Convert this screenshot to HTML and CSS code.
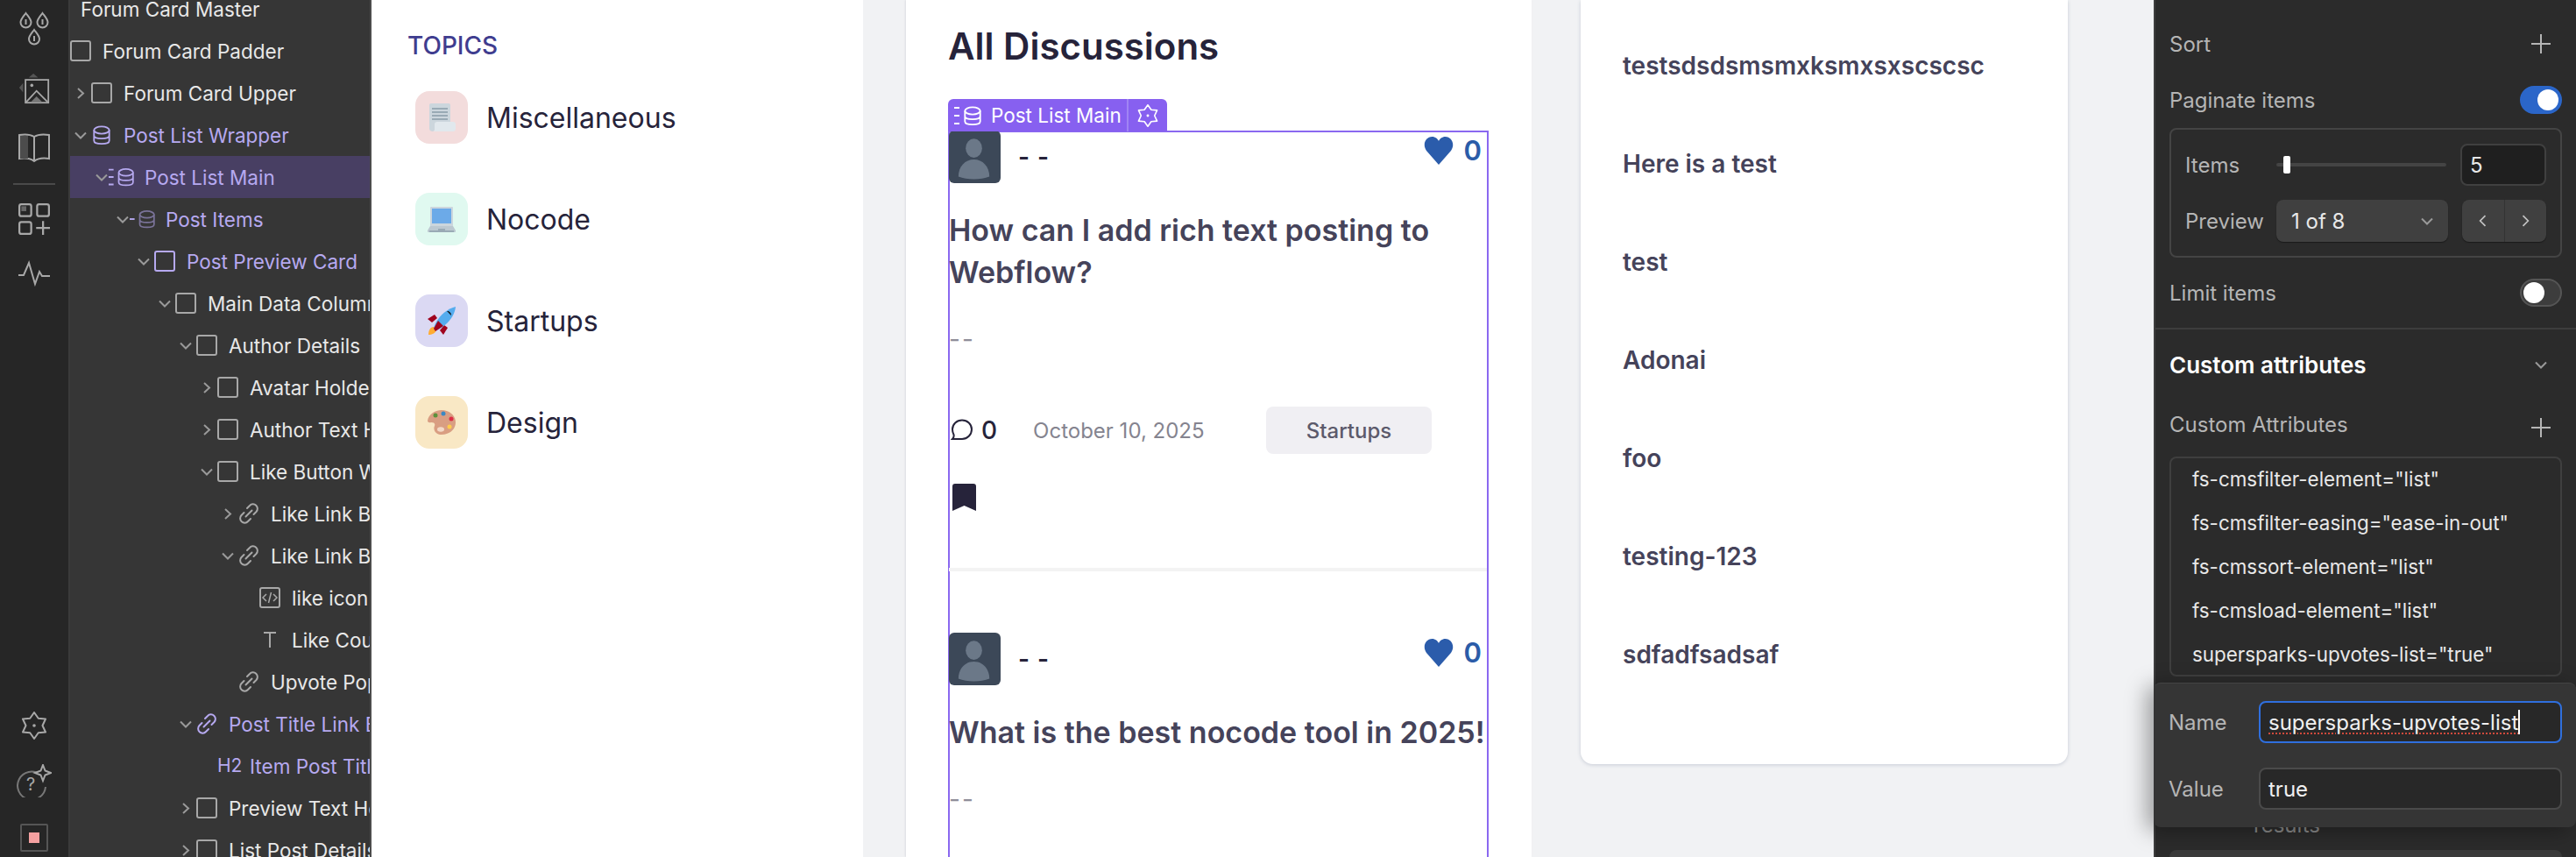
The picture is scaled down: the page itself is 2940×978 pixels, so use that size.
FILE: index.html
```html
<!DOCTYPE html>
<html>

<head>
    <title>Forum Card - Designer</title>
    <link rel="stylesheet" href="styles.css">
</head>

<body>
    <!-- shared icons -->
    <svg class="defs" width="0" height="0">
        <symbol id="box" viewBox="0 0 24 24"><rect x="1" y="1" width="22" height="22" rx="2" fill="none" stroke="currentColor" stroke-width="2"/></symbol>
        <symbol id="chev-r" viewBox="0 0 24 24"><path d="M9 7l6 5.500-6 5.500" fill="none" stroke="#9a9a9a" stroke-width="2"/></symbol>
        <symbol id="chev-d" viewBox="0 0 24 24"><path d="M6 9.500l6 6 6-6" fill="none" stroke="#9a9a9a" stroke-width="2"/></symbol>
        <symbol id="db" viewBox="0 0 24 24"><g fill="none" stroke="currentColor" stroke-width="2"><ellipse cx="12" cy="6" rx="9.500" ry="4.500"/><path d="M2.500 6v13c0 2.500 4 4 9.500 4s9.500-1.500 9.500-4V6M2.500 12.500c0 2.500 4 4 9.500 4s9.500-1.500 9.500-4"/></g></symbol>
        <symbol id="link" viewBox="0 0 24 24"><g fill="none" stroke="currentColor" stroke-width="2" stroke-linecap="round"><path d="M10 6l3-3a5 5 0 0 1 7.500 7l-3 3"/><path d="M14 18l-3 3a5 5 0 0 1-7.500-7l3-3"/><path d="M8.500 15.500l7-7"/></g></symbol>
        <symbol id="gear" viewBox="0 0 32 32"><polygon points="16,1 20.750,7.770 29,8.500 25.500,16 29,23.500 20.750,24.230 16,31 11.250,24.230 3,23.500 6.500,16 3,8.500 11.250,7.770" fill="none" stroke="currentColor" stroke-width="2" stroke-linejoin="round"/><circle cx="16" cy="16" r="1.800" fill="currentColor"/></symbol>
        <symbol id="heart" viewBox="0 0 34 32"><path d="M17 32L3 16C-2 9 2 0 9.500 0C13 0 16 2.500 17 5C18 2.500 21 0 24.500 0C32 0 36 9 31 16Z" fill="#2b5cab"/></symbol>
        <symbol id="person" viewBox="0 0 60 60"><ellipse cx="29" cy="20" rx="9.500" ry="11" fill="#6b7888"/><path d="M11 53c0-12 8-20 18-20s18 8 18 20c-10 4-26 4-36 0z" fill="#6b7888"/></symbol>
        <symbol id="plus" viewBox="0 0 22 22"><path d="M11 0v22M0 11h22" stroke="#b5b5b5" stroke-width="2"/></symbol>
    </svg>

    <div class="app">
        <!-- left rail -->
        <aside class="rail">
            <div class="rail-group">
                <svg class="rail-icon" viewBox="0 0 36 40"><g fill="none" stroke="#a8a8a8" stroke-width="2"><path d="M8.500 2c-3 4-6 7-6 10.500a6 6 0 0 0 12 0C14.500 9 11.500 6 8.500 2z"/><path d="M27.500 2c-3 4-6 7-6 10.500a6 6 0 0 0 12 0C33.500 9 30.500 6 27.500 2z"/><path d="M18 21c-3 4-6 7-6 10.500a6 6 0 0 0 12 0C24 28 21 25 18 21z"/></g><path d="M8.500 9v6M27.500 9v6M18 28v6" stroke="#a8a8a8" stroke-width="2"/></svg>
                <svg class="rail-icon" viewBox="0 0 40 40"><path d="M19 1l6 5H13zM1 19l5-6v12z" fill="#555"/><rect x="9" y="9" width="29" height="29" fill="none" stroke="#a8a8a8" stroke-width="2"/><circle cx="17" cy="16" r="2" fill="#a8a8a8"/><path d="M10 37l13-14 14 14" fill="none" stroke="#a8a8a8" stroke-width="2"/><path d="M16 37l7-7 7 7z" fill="#777"/></svg>
                <svg class="rail-icon" viewBox="0 0 36 34"><path d="M1 2c6-1 12-1 17 2 5-3 11-3 17-2v27c-6-1-12-1-17 3-5-4-11-4-17-3z" fill="none" stroke="#a8a8a8" stroke-width="2"/><path d="M18 4v28" stroke="#a8a8a8" stroke-width="2"/><path d="M2 3h9v26H2z" fill="#4c4c4c"/></svg>
                <div class="rail-rule"></div>
                <svg class="rail-icon" viewBox="0 0 32 32"><g fill="none" stroke="#a8a8a8" stroke-width="2"><rect x="1" y="1" width="12" height="12" rx="2"/><rect x="19" y="1" width="12" height="12" rx="2"/><rect x="1" y="19" width="12" height="12" rx="2"/><path d="M25 18v14M18 25h14"/></g><path d="M3 3h5v5H3z" fill="#666"/></svg>
                <svg class="rail-icon rail-pulse" viewBox="0 0 36 28"><path d="M0 16h6l6-14 7 24 5-14 3 5h9" fill="none" stroke="#a8a8a8" stroke-width="2"/></svg>
            </div>
            <div class="rail-group rail-bottom">
                <svg class="rail-gear"><use href="#gear"/></svg>
                <svg class="rail-help" viewBox="0 0 40 38"><path d="M27 12a16 16 0 1 0 6 14" fill="none" stroke="#777" stroke-width="2"/><text x="11" y="30" class="help-mark">?</text><path d="M30 1l2.500 6.500L39 10l-6.500 2.500L30 19l-2.500-6.500L21 10l6.500-2.500z" fill="#262626" stroke="#a8a8a8" stroke-width="2"/></svg>
                <div class="rail-stop"><span></span></div>
            </div>
        </aside>

        <!-- navigator tree -->
        <nav class="tree">
            <div class="row master"><span class="label">Forum Card Master</span></div>
            <div class="row"><svg class="ic"><use href="#box"/></svg><span class="label">Forum Card Padder</span></div>
            <div class="row"><svg class="chev"><use href="#chev-r"/></svg><svg class="ic"><use href="#box"/></svg><span class="label">Forum Card Upper</span></div>
            <div class="row purple"><svg class="chev"><use href="#chev-d"/></svg><svg class="ic db"><use href="#db"/></svg><span class="label">Post List Wrapper</span></div>
            <div class="row purple selected d1"><svg class="chev"><use href="#chev-d"/></svg><svg class="ic wide" viewBox="0 0 32 24"><path d="M0 3h6M0 12h6M0 21h6" stroke="#b6a9f0" stroke-width="2"/><use href="#db" x="10" width="22" height="24"/></svg><span class="label">Post List Main</span></div>
            <div class="row purple d2"><svg class="chev"><use href="#chev-d"/></svg><svg class="ic wide" viewBox="0 0 32 24"><path d="M0 12h6" stroke="#b6a9f0" stroke-width="2"/><use href="#db" x="10" width="22" height="24" color="#7a7399"/></svg><span class="label">Post Items</span></div>
            <div class="row purple d3"><svg class="chev"><use href="#chev-d"/></svg><svg class="ic"><use href="#box"/></svg><span class="label">Post Preview Card</span></div>
            <div class="row d4"><svg class="chev"><use href="#chev-d"/></svg><svg class="ic"><use href="#box"/></svg><span class="label">Main Data Column</span></div>
            <div class="row d5"><svg class="chev"><use href="#chev-d"/></svg><svg class="ic"><use href="#box"/></svg><span class="label">Author Details</span></div>
            <div class="row d6"><svg class="chev"><use href="#chev-r"/></svg><svg class="ic"><use href="#box"/></svg><span class="label">Avatar Holder</span></div>
            <div class="row d6"><svg class="chev"><use href="#chev-r"/></svg><svg class="ic"><use href="#box"/></svg><span class="label">Author Text Holder</span></div>
            <div class="row d6"><svg class="chev"><use href="#chev-d"/></svg><svg class="ic"><use href="#box"/></svg><span class="label">Like Button Wrapper</span></div>
            <div class="row d7"><svg class="chev"><use href="#chev-r"/></svg><svg class="ic link"><use href="#link"/></svg><span class="label">Like Link Block</span></div>
            <div class="row d7"><svg class="chev"><use href="#chev-d"/></svg><svg class="ic link"><use href="#link"/></svg><span class="label">Like Link Block</span></div>
            <div class="row d8"><span class="chev"></span><svg class="ic" viewBox="0 0 24 24"><rect x="1" y="1" width="22" height="22" rx="2" fill="none" stroke="currentColor" stroke-width="2"/><path d="M8 8l-4 4 4 4M16 8l4 4-4 4M13.500 6l-3 12" fill="none" stroke="#a8a8a8" stroke-width="1.500"/></svg><span class="label">like icon</span></div>
            <div class="row d8"><span class="chev"></span><svg class="ic" viewBox="0 0 24 24"><path d="M5 4h14M12 4v17" stroke="#a8a8a8" stroke-width="2" fill="none"/></svg><span class="label">Like Count</span></div>
            <div class="row d7"><span class="chev"></span><svg class="ic link"><use href="#link"/></svg><span class="label">Upvote Popup</span></div>
            <div class="row purple d5"><svg class="chev"><use href="#chev-d"/></svg><svg class="ic link"><use href="#link"/></svg><span class="label">Post Title Link Block</span></div>
            <div class="row purple d6"><span class="chev"></span><span class="ic tag-h2">H2</span><span class="label">Item Post Title</span></div>
            <div class="row d5"><svg class="chev"><use href="#chev-r"/></svg><svg class="ic"><use href="#box"/></svg><span class="label">Preview Text Holder</span></div>
            <div class="row d5"><svg class="chev"><use href="#chev-r"/></svg><svg class="ic"><use href="#box"/></svg><span class="label">List Post Details</span></div>
        </nav>

        <!-- page being edited -->
        <main class="canvas">
            <section class="topics">
                <h3 class="topics-title">TOPICS</h3>
                <div class="topic">
                    <div class="tile tile-red">
                        <svg class="emoji" viewBox="0 0 32 32"><path d="M2 2a2 2 0 0 1 2-2h20a2 2 0 0 1 2 2v22H8v6a2 2 0 0 1-2 2c-2 0-4-1-4-3z" fill="#ccd6dd"/><path d="M5 5h18v2H5zM5 9h18v2H5zM5 13h18v2H5zM5 17h18v2H5z" fill="#99aab5"/><path d="M8 24a3 3 0 0 1 3-3h18a3 3 0 0 1 3 3v5a3 3 0 0 1-3 3H6c2 0 2-2 2-3z" fill="#e1e8ed"/></svg>
                    </div>
                    <span class="topic-name">Miscellaneous</span>
                </div>
                <div class="topic">
                    <div class="tile tile-green">
                        <svg class="emoji" viewBox="0 0 32 32"><path d="M4 2h24a1 1 0 0 1 1 1v22H3V3a1 1 0 0 1 1-1z" fill="#ccd6dd"/><path d="M5 4h22v17H5z" fill="#6caae8"/><path d="M3 24h26l3 5v1a1 1 0 0 1-1 1H1a1 1 0 0 1-1-1v-1z" fill="#bcc8d0"/><path d="M2 29h28v2H2z" fill="#99aab5"/><path d="M12 27h8v3h-8z" fill="#99aab5"/></svg>
                    </div>
                    <span class="topic-name">Nocode</span>
                </div>
                <div class="topic">
                    <div class="tile tile-violet">
                        <svg class="emoji" viewBox="0 0 32 32"><path d="M0 14l8-5 3 4-6 5z" fill="#a0041e"/><path d="M18 32l5-8-4-3-5 6z" fill="#a0041e"/><path d="M1 32c0-5 2-9 6-9 3 0 4 2 3 4-1 3-5 5-9 5z" fill="#ffac33"/><path d="M7 25C9 15 20 3 32 0c-1 12-12 23-22 27z" fill="#55acee"/><path d="M7 25l5-9 6 6-9 6z" fill="#a0041e"/><path d="M22 5c3 0 5 2 5 5-2-2-3-3-5-5z" fill="#111"/></svg>
                    </div>
                    <span class="topic-name">Startups</span>
                </div>
                <div class="topic">
                    <div class="tile tile-amber">
                        <svg class="emoji" viewBox="0 0 32 32"><path d="M16 2c9 0 16 6 16 14s-7 14-16 14C9 30 6 24 8 20c1-3-1-4-4-4-3 1-4-1-4-2C1 7 8 2 16 2z" fill="#d99e82"/><circle cx="9" cy="8" r="2.500" fill="#5c913b"/><circle cx="18" cy="6" r="2.500" fill="#3b88c3"/><circle cx="27" cy="12" r="2.500" fill="#dd2e44"/><circle cx="25" cy="21" r="2.500" fill="#ffcc4d"/><ellipse cx="15" cy="24" rx="4" ry="2.800" fill="#f3d9c6"/></svg>
                    </div>
                    <span class="topic-name">Design</span>
                </div>
            </section>

            <section class="feed">
                <h1 class="feed-title">All Discussions</h1>
                <div class="post-list">
                    <div class="sel-tag">
                        <span class="sel-name">
                            <svg class="sel-ic" viewBox="0 0 32 24"><path d="M0 3h6M0 12h6M0 21h6" stroke="#fff" stroke-width="2"/><use href="#db" x="10" width="22" height="24" color="#fff"/></svg>
                            Post List Main
                        </span>
                        <span class="sel-gear"><svg class="sel-gear-ic"><use href="#gear"/></svg></span>
                    </div>

                    <article class="post">
                        <div class="author">
                            <svg class="avatar"><use href="#person"/></svg>
                            <span class="author-name">- -</span>
                            <div class="likes"><svg class="heart"><use href="#heart"/></svg><span class="like-count">0</span></div>
                        </div>
                        <h2 class="post-title">How can I add rich text posting to Webflow?</h2>
                        <p class="excerpt">--</p>
                        <div class="meta">
                            <svg class="comment" viewBox="0 0 26 26"><path d="M13 1.500c6 0 11 4.500 11 10.500s-5 11-11 11H2c1.500-1.500 2-3 1.500-5C2.500 16 2 14 2 12 2 6 7 1.500 13 1.500z" fill="none" stroke="#26233a" stroke-width="2"/></svg>
                            <span class="comment-count">0</span>
                            <span class="date">October 10, 2025</span>
                            <span class="pill">Startups</span>
                        </div>
                        <svg class="bookmark" viewBox="0 0 27 31"><path d="M0 3a3 3 0 0 1 3-3h21a3 3 0 0 1 3 3v28l-13.500-6L0 31z" fill="#26233a"/></svg>
                    </article>

                    <article class="post">
                        <div class="author">
                            <svg class="avatar"><use href="#person"/></svg>
                            <span class="author-name">- -</span>
                            <div class="likes"><svg class="heart"><use href="#heart"/></svg><span class="like-count">0</span></div>
                        </div>
                        <h2 class="post-title">What is the best nocode tool in 2025!</h2>
                        <p class="excerpt">--</p>
                    </article>
                </div>
            </section>

            <section class="recent">
                <div class="recent-item">testsdsdsmsmxksmxsxscscsc</div>
                <div class="recent-item">Here is a test</div>
                <div class="recent-item">test</div>
                <div class="recent-item">Adonai</div>
                <div class="recent-item">foo</div>
                <div class="recent-item">testing-123</div>
                <div class="recent-item">sdfadfsadsaf</div>
            </section>
        </main>

        <!-- settings panel -->
        <aside class="panel">
            <div class="p-row p-first"><span>Sort</span><svg class="plus"><use href="#plus"/></svg></div>
            <div class="p-row p-mt16"><span>Paginate items</span><span class="toggle on"><i></i></span></div>
            <div class="p-box">
                <div class="p-line">
                    <span class="p-label">Items</span>
                    <div class="slider"><i></i></div>
                    <div class="num">5</div>
                </div>
                <div class="p-line">
                    <span class="p-label">Preview</span>
                    <div class="select">1 of 8<svg class="sel-chev"><use href="#chev-d"/></svg></div>
                    <div class="pager">
                        <span><svg class="pg" viewBox="0 0 24 24"><path d="M15 5l-7 7 7 7" fill="none" stroke="#c4c4c4" stroke-width="2"/></svg></span>
                        <span><svg class="pg" viewBox="0 0 24 24"><path d="M9 5l7 7-7 7" fill="none" stroke="#c4c4c4" stroke-width="2"/></svg></span>
                    </div>
                </div>
            </div>
            <div class="p-row p-mt16"><span>Limit items</span><span class="toggle"><i></i></span></div>
            <div class="p-rule"></div>
            <div class="p-row p-head"><span>Custom attributes</span><svg class="head-chev"><use href="#chev-d"/></svg></div>
            <div class="p-row p-attrs"><span>Custom Attributes</span><svg class="plus"><use href="#plus"/></svg></div>
            <div class="attr-box">
                <div class="attr">fs-cmsfilter-element="list"</div>
                <div class="attr">fs-cmsfilter-easing="ease-in-out"</div>
                <div class="attr">fs-cmssort-element="list"</div>
                <div class="attr">fs-cmsload-element="list"</div>
                <div class="attr">supersparks-upvotes-list="true"</div>
            </div>
            <div class="results">results</div>
            <div class="under-box"></div>

            <div class="popover">
                <div class="pop-row">
                    <span class="pop-label">Name</span>
                    <div class="pop-input active"><span class="squiggle">supersparks-upvotes-list</span><i class="caret"></i></div>
                </div>
                <div class="pop-row">
                    <span class="pop-label">Value</span>
                    <div class="pop-input">true</div>
                </div>
            </div>
        </aside>
    </div>
</body>

</html>
```

FILE: styles.css
```css
* { box-sizing: border-box; }

html, body {
    margin: 0;
    height: 978px;
    overflow: hidden;
}

body {
    font-family: Inter, "Noto Sans", "Liberation Sans", sans-serif;
    background: #f1f2f4;
}

.defs { position: absolute; }

.app {
    display: flex;
    height: 978px;
    overflow: hidden;
}

/* rail */
.rail {
    width: 80px;
    flex: none;
    background: #262626;
    border-right: 2px solid #3a3a3a;
    display: flex;
    flex-direction: column;
    justify-content: space-between;
    align-items: center;
}

.rail-group {
    display: flex;
    flex-direction: column;
    align-items: center;
}

.rail-icon {
    width: 36px;
    height: 40px;
    margin-top: 28px;
}

.rail-group .rail-icon:first-child { margin-top: 13px; }
.rail-group .rail-pulse { margin-top: 22px; }

.rail-rule {
    width: 48px;
    height: 2px;
    background: #4a4a4a;
    margin-top: 20px;
    margin-bottom: -9px;
}

.rail-bottom { padding-bottom: 6px; }

.rail-gear {
    width: 32px;
    height: 32px;
    color: #a8a8a8;
}

.rail-help {
    width: 40px;
    height: 38px;
    margin-top: 28px;
}

.help-mark {
    font-size: 20px;
    fill: #a8a8a8;
}

.rail-stop {
    width: 32px;
    height: 32px;
    margin-top: 30px;
    border: 2px solid #555;
    border-radius: 2px;
    display: flex;
    align-items: center;
    justify-content: center;
}

.rail-stop span {
    width: 12px;
    height: 12px;
    background: #f4a0a0;
}

/* navigator */
.tree {
    width: 344px;
    flex: none;
    background: #363636;
    border-right: 2px solid #4c4c4c;
    margin-top: -14px;
    overflow: hidden;
}

.row {
    height: 48px;
    display: flex;
    align-items: center;
    white-space: nowrap;
    color: #e8e8e8;
    font-size: 22.500px;
}

.row.master { padding-left: 12px; }
.row.purple { color: #b6a9f0; }
.row.selected { background: #483f63; }

.d1 { padding-left: 24px; }
.d2 { padding-left: 48px; }
.d3 { padding-left: 72px; }
.d4 { padding-left: 96px; }
.d5 { padding-left: 120px; }
.d6 { padding-left: 144px; }
.d7 { padding-left: 168px; }
.d8 { padding-left: 192px; }

.chev {
    width: 24px;
    height: 24px;
    flex: none;
}

.ic {
    width: 24px;
    height: 24px;
    flex: none;
    color: #a8a8a8;
    overflow: visible;
}

.purple .ic { color: #b6a9f0; }

.ic.db {
    width: 22px;
    margin: 0 1px;
}

.ic.wide {
    width: 30px;
    margin-left: -4px;
    margin-right: -2px;
}

.tag-h2 {
    font-size: 21px;
    line-height: 24px;
    color: #b6a9f0;
}

.label { margin-left: 13px; }
.row.master .label { margin-left: 0; }

/* canvas */
.canvas {
    flex: 1;
    display: flex;
    align-items: flex-start;
    overflow: hidden;
    min-width: 0;
}

.topics {
    width: 561px;
    height: 978px;
    background: #fff;
    padding: 32px 0 0 41px;
}

.topics-title {
    margin: 0 0 32px;
    font-size: 28px;
    line-height: 40px;
    font-weight: 500;
    color: #3f3d8f;
}

.topic {
    display: flex;
    align-items: center;
    height: 60px;
    margin: 0 0 56px 9px;
}

.tile {
    width: 60px;
    height: 60px;
    border-radius: 16px;
    display: flex;
    align-items: center;
    justify-content: center;
}

.tile-red { background: #f3dcdc; }
.tile-green { background: #e0f9f0; }
.tile-violet { background: #dbd9f3; }
.tile-amber { background: #f9e8c5; }

.emoji {
    width: 32px;
    height: 32px;
}

.topic-name {
    margin-left: 21px;
    font-size: 32px;
    color: #26233a;
}

.feed {
    width: 714px;
    height: 978px;
    margin-left: 49px;
    padding: 27px 0 0 48px;
    background: #fff;
    box-shadow: -1px 0 2px #dcdde2;
}

.feed-title {
    margin: 0 0 70px;
    font-size: 42px;
    line-height: 52px;
    font-weight: 600;
    color: #26233a;
}

.post-list {
    position: relative;
    width: 617px;
    height: 1000px;
    padding: 0 2px 0 1px;
    box-shadow: inset 0 0 0 2px #8a68f0;
}

.sel-tag {
    position: absolute;
    left: 0;
    top: -36px;
    height: 37px;
    width: 250px;
    display: flex;
    background: #8760f0;
    border-radius: 6px 6px 0 0;
    color: #fff;
    font-size: 22.500px;
}

.sel-name {
    flex: 1;
    display: flex;
    align-items: center;
    gap: 10px;
    padding-left: 7px;
    border-right: 2px solid #a084f4;
    white-space: nowrap;
}

.sel-ic {
    width: 32px;
    height: 24px;
    flex: none;
}

.sel-gear {
    width: 44px;
    display: flex;
    align-items: center;
    justify-content: center;
}

.sel-gear-ic {
    width: 26px;
    height: 28px;
    color: #fff;
}

.post + .post {
    padding-top: 70px;
}

.post:first-of-type {
    height: 503px;
    border-bottom: 4px solid #f3f3f3;
}

.author {
    display: flex;
    align-items: center;
    height: 60px;
}

.avatar {
    width: 59px;
    height: 60px;
    background: #3c4858;
    border-radius: 6px;
    flex: none;
}

.author-name {
    margin-left: 20px;
    font-size: 28px;
    font-weight: 600;
    word-spacing: 2px;
    color: #26233a;
}

.likes {
    margin: 4px 6px 0 auto;
    align-self: flex-start;
    display: flex;
    align-items: center;
    gap: 12px;
}

.heart {
    width: 34px;
    height: 32px;
}

.like-count {
    font-size: 31px;
    font-weight: 600;
    color: #2b5ca8;
}

.post-title {
    margin: 30px 0 0;
    font-size: 34px;
    line-height: 48px;
    font-weight: 600;
    color: #45435a;
}

.excerpt {
    margin: 37px 0 0;
    font-size: 28px;
    line-height: 30px;
    letter-spacing: 2px;
    color: #8f8e99;
}

.meta {
    display: flex;
    align-items: center;
    height: 54px;
    margin-top: 62px;
    padding-left: 2px;
}

.comment {
    width: 26px;
    height: 26px;
    flex: none;
}

.comment-count {
    margin-left: 9px;
    font-size: 28px;
    font-weight: 500;
    color: #26233a;
}

.date {
    margin-left: 41px;
    font-size: 24px;
    color: #85848f;
}

.pill {
    margin: 0 63px 0 auto;
    width: 189px;
    height: 54px;
    background: #f0eff3;
    border-radius: 8px;
    display: flex;
    align-items: center;
    justify-content: center;
    font-size: 24px;
    font-weight: 500;
    color: #5c5a6b;
}

.bookmark {
    display: block;
    width: 27px;
    height: 31px;
    margin: 34px 0 0 4px;
}

.recent {
    width: 556px;
    margin-left: 56px;
    padding: 19px 0 69px 48px;
    background: #fff;
    border-radius: 0 0 14px 14px;
    box-shadow: 0 1px 4px #c8ccd6;
}

.recent-item {
    height: 112px;
    display: flex;
    align-items: center;
    font-size: 28px;
    font-weight: 600;
    color: #45435a;
}

/* settings panel */
.panel {
    position: relative;
    width: 482px;
    flex: none;
    background: #2b2b2b;
    border-left: 2px solid #3d3d3d;
    padding: 0 16px;
    color: #b5b5b5;
    font-size: 24px;
}

.p-row {
    display: flex;
    align-items: center;
    justify-content: space-between;
    height: 48px;
}

.p-first { margin-top: 26px; }
.p-mt16 { margin-top: 16px; }

.plus {
    width: 22px;
    height: 22px;
    margin-right: 13px;
}

.toggle {
    width: 48px;
    height: 32px;
    border-radius: 16px;
    background: #3d3d3d;
    border: 2px solid #555;
    display: flex;
    align-items: center;
    padding-left: 2px;
}

.toggle i {
    width: 24px;
    height: 24px;
    border-radius: 50%;
    background: #fff;
}

.toggle.on {
    background: #2b66c9;
    border-color: #2b66c9;
    justify-content: flex-end;
    padding: 0 2px 0 0;
}

.p-box {
    height: 148px;
    margin-top: 8px;
    border: 2px solid #444;
    border-radius: 8px;
    padding: 16px 16px;
    display: flex;
    flex-direction: column;
    gap: 16px;
}

.p-line {
    display: flex;
    align-items: center;
    height: 48px;
}

.p-label { width: 104px; }

.slider {
    position: relative;
    width: 194px;
    height: 4px;
    background: #444;
    border-radius: 2px;
}

.slider i {
    position: absolute;
    left: 8px;
    top: -8px;
    width: 8px;
    height: 20px;
    background: #fff;
    border-radius: 2px;
}

.num {
    width: 98px;
    height: 48px;
    margin-left: 16px;
    background: #1f1f1f;
    border: 2px solid #404040;
    border-radius: 8px;
    padding-left: 9px;
    display: flex;
    align-items: center;
    color: #e8e8e8;
}

.select {
    width: 196px;
    height: 48px;
    background: #404040;
    border-radius: 8px;
    padding: 0 12px 0 17px;
    display: flex;
    align-items: center;
    justify-content: space-between;
    color: #e8e8e8;
    box-shadow: 0 1px 1px #1a1a1a;
}

.sel-chev {
    width: 24px;
    height: 24px;
}

.pager {
    width: 96px;
    height: 48px;
    margin-left: 16px;
    display: flex;
    background: #404040;
    border-radius: 8px;
    box-shadow: 0 1px 1px #1a1a1a;
}

.pager span {
    flex: 1;
    display: flex;
    align-items: center;
    justify-content: center;
}

.pager span + span { border-left: 1px solid #333; }

.pg {
    width: 20px;
    height: 20px;
}

.p-rule {
    height: 2px;
    margin: 16px -16px 0;
    background: #3d3d3d;
}

.p-head {
    margin-top: 16px;
    color: #fff;
    font-weight: 600;
    font-size: 26px;
}

.head-chev {
    width: 24px;
    height: 24px;
    margin-right: 12px;
}

.p-attrs { margin-top: 20px; }
.p-attrs .plus { margin-top: 8px; }

.attr-box {
    height: 251px;
    margin-top: 13px;
    box-shadow: inset 0 0 0 2px #3f3f3f;
    border-radius: 8px;
    padding-left: 26px;
    color: #e8e8e8;
    font-size: 22.400px;
}

.attr {
    height: 50px;
    display: flex;
    align-items: center;
    white-space: nowrap;
}

.results {
    margin: 146px 0 0 96px;
    height: 48px;
    line-height: 48px;
    color: #888;
}

.under-box {
    height: 60px;
    margin-top: 4px;
    background: #3a3a3a;
    border-radius: 8px;
}

.popover {
    position: absolute;
    left: -2px;
    right: 0;
    top: 779px;
    height: 165px;
    background: #353535;
    border-top: 1px solid #444;
    border-radius: 8px;
    box-shadow: -8px 4px 24px rgba(0, 0, 0, 0.35);
    padding: 20px 16px 0 17px;
}

.pop-row {
    display: flex;
    align-items: center;
    height: 48px;
    margin-bottom: 28px;
}

.pop-label {
    width: 103px;
    color: #b5b5b5;
}

.pop-input {
    flex: 1;
    height: 48px;
    background: #282828;
    border: 2px solid #4a4a4a;
    border-radius: 8px;
    padding-left: 9px;
    display: flex;
    align-items: center;
    color: #f0f0f0;
}

.pop-input.active { border-color: #2f6fde; }

.squiggle {
    text-decoration: underline dotted #d04a3c 2px;
    text-underline-offset: 4px;
}

.caret {
    width: 2px;
    height: 28px;
    background: #fff;
}
```
